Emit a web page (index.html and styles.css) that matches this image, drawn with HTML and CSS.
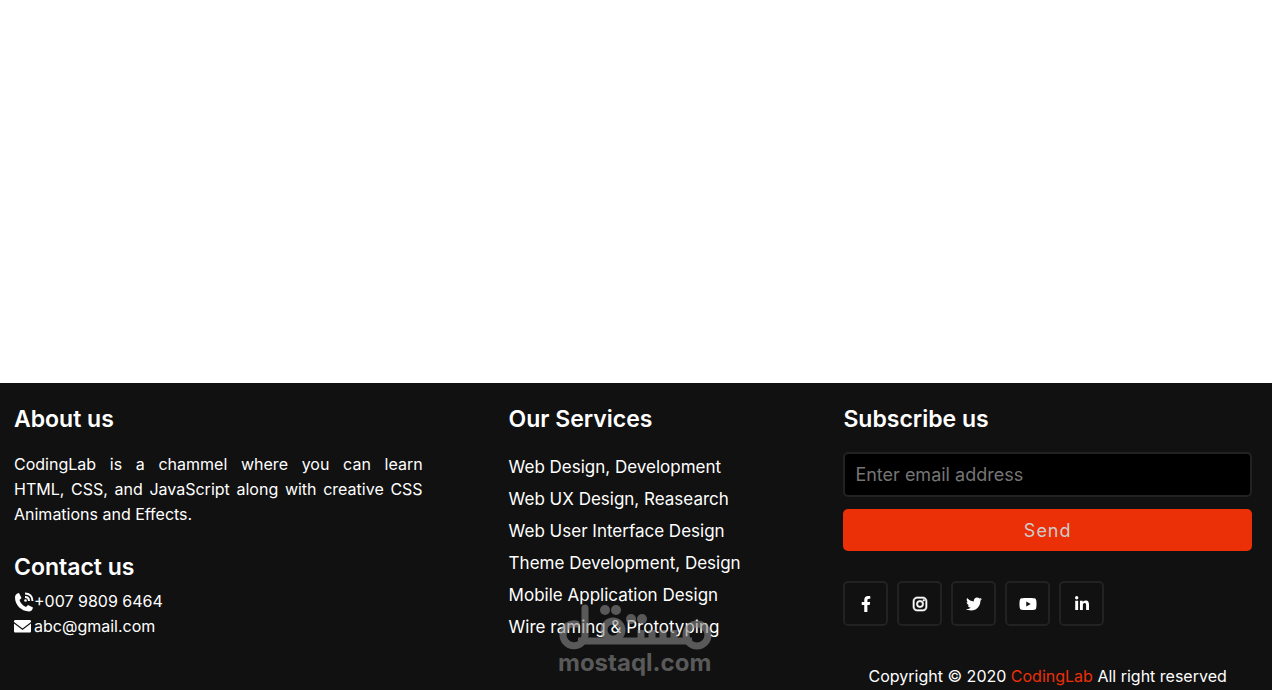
FILE: index.html
```html
<!DOCTYPE html>
<html lang="en">
<head>
  <meta charset="utf-8">
  <meta name="viewport" content="width=device-width, initial-scale=1">
  <title>Footer</title>
  <link rel="stylesheet" href="styles.css">
</head>
<body>
  <footer class="footer">
    <div class="content">
      <div class="left">
        <h2>About us</h2>
        <p class="about">CodingLab is a chammel where you can learn HTML,&nbsp;CSS, and JavaScript along with creative CSS Animations and Effects.</p>
        <h2>Contact us</h2>
        <div class="contact">
          <p>
            <svg viewBox="0 0 20 20" aria-hidden="true">
              <path d="M5 1 7.500 6 5.500 8C6.500 11 8.500 13.500 12 15L14 13 19 15.500C18.500 18 17 19.500 15 19.500 7 19 1 13 1 5.500 1 3 2.500 1.500 5 1Z"/>
              <path class="wave" d="M11 1.500C15.500 1.500 18.500 4.500 18.500 9M11 5C13.500 5 15 6.500 15 9"/>
              <circle cx="11.500" cy="8.500" r="1.300"/>
            </svg>
            <span>+007 9809 6464</span>
          </p>
          <p>
            <svg viewBox="0 0 20 20" aria-hidden="true">
              <path d="M0 4.500C0 3.500.5 3 1.500 3H15.500C16.500 3 17 3.500 17 4.500V5L8.500 11.500 0 5ZM0 6.500 8.500 13 17 6.500V14C17 15 16.500 15.500 15.500 15.500H1.500C.5 15.500 0 15 0 14Z"/>
            </svg>
            <span>abc@gmail.com</span>
          </p>
        </div>
      </div>
      <div class="middle">
        <h2>Our Services</h2>
        <ul>
          <li><a href="#">Web Design, Development</a></li>
          <li><a href="#">Web UX Design, Reasearch</a></li>
          <li><a href="#">Web User Interface Design</a></li>
          <li><a href="#">Theme Development, Design</a></li>
          <li><a href="#">Mobile Application Design</a></li>
          <li><a href="#">Wire raming &amp; Prototyping</a></li>
        </ul>
      </div>
      <div class="right">
        <h2>Subscribe us</h2>
        <form action="#">
          <input type="email" placeholder="Enter email address" aria-label="Email address">
          <button type="submit">Send</button>
        </form>
        <div class="media-icons">
          <a href="#" aria-label="Facebook"><svg viewBox="0 0 320 512"><path d="M279 288l14-93h-89v-60c0-25 12-50 52-50h41V7s-37-7-72-7c-73 0-121 44-121 125v70H23v93h81v224h100V288z"/></svg></a>
          <a href="#" aria-label="Instagram"><svg class="bold" viewBox="0 0 448 512"><path fill-rule="evenodd" d="M132 32H316C389 32 448 91 448 164V348C448 421 389 480 316 480H132C59 480 0 421 0 348V164C0 91 59 32 132 32ZM136 72C82 72 40 114 40 168V344C40 398 82 440 136 440H312C366 440 408 398 408 344V168C408 114 366 72 312 72ZM224 141A115 115 0 1 1 224 371A115 115 0 1 1 224 141ZM224 181A75 75 0 1 0 224 331A75 75 0 1 0 224 181ZM344 109A27 27 0 1 1 344 163A27 27 0 1 1 344 109Z"/></svg></a>
          <a href="#" aria-label="Twitter"><svg viewBox="0 0 512 512"><path d="M459 152c1 4 1 9 1 14 0 138-106 298-299 298-59 0-115-17-161-47 8 1 16 1 25 1 49 0 94-16 130-45-46-1-85-31-98-73 6 1 13 2 20 2 9 0 19-1 28-4-48-10-84-52-84-103v-1c14 8 30 13 47 13-28-19-46-51-46-87 0-19 5-37 14-53 51 64 129 105 216 110-2-8-3-16-3-24 0-58 47-105 105-105 30 0 57 13 76 33 24-5 46-13 66-25-8 24-24 45-46 58 21-2 41-8 60-16-14 21-32 39-51 54z"/></svg></a>
          <a href="#" aria-label="YouTube"><svg viewBox="0 0 576 512"><path fill-rule="evenodd" d="M549 124c-6-24-25-42-48-49-43-11-213-11-213-11S118 64 75 75c-23 7-42 25-48 49-12 43-12 132-12 132s0 90 12 133c6 24 25 42 48 48 43 11 213 11 213 11s170 0 213-11c23-6 42-24 48-48 12-43 12-133 12-133s0-89-12-132zM232 338V175l143 81z"/></svg></a>
          <a href="#" aria-label="LinkedIn"><svg viewBox="0 0 448 512"><path d="M100 448H7V149h93zM54 108A54 54 0 1 1 54 0 54 54 0 0 1 54 108zM448 448h-93V302c0-34-1-79-48-79-49 0-56 38-56 77v148h-93V149h89v41h1c13-24 43-48 88-48 94 0 112 62 112 142z"/></svg></a>
        </div>
        <p class="copyright">Copyright © 2020 <a href="#">CodingLab</a> All right reserved</p>
      </div>
    </div>
    <div class="watermark">
      <svg viewBox="0 0 154 46" aria-hidden="true">
        <path stroke-linecap="round" d="M27 4V31A11 11 0 1 1 18 20"/>
        <path d="M20 37H134M83 36V26M94 36V26M105 36V26M116 36V26"/>
        <circle cx="55" cy="26" r="9"/>
        <circle cx="139" cy="31" r="11"/>
        <g class="dots">
          <circle cx="47" cy="6" r="5"/>
          <circle cx="58" cy="6" r="5"/>
          <circle cx="73" cy="15" r="5"/>
          <circle cx="84" cy="15" r="5"/>
        </g>
      </svg>
      <span>mostaql.com</span>
    </div>
  </footer>
</body>
</html>
```
FILE: styles.css
```css
* {
  margin: 0;
  padding: 0;
  box-sizing: border-box;
  font-family: Inter, "Open Sans", sans-serif;
}

body {
  min-height: 100vh;
  display: flex;
  flex-direction: column;
  justify-content: flex-end;
  background: #fff;
}

.footer {
  position: relative;
  background: #111;
  color: #fff;
  font-size: 16px;
  line-height: 25px;
}

.content {
  display: grid;
  grid-template-columns: 409fr 249fr 409fr;
  column-gap: 86px;
  padding: 18px 20px 1px 14px;
}

h2 {
  font-size: 23px;
  font-weight: 600;
  line-height: 36px;
}

.about {
  margin: 15px 0 22px;
  text-align: justify;
}

.contact {
  margin-top: 4px;
}

.contact p {
  display: flex;
  align-items: center;
}

.contact svg {
  width: 20px;
  height: 20px;
  fill: #fff;
}

.contact .wave {
  fill: none;
  stroke: #fff;
  stroke-width: 2;
}

ul {
  list-style: none;
  margin-top: 14px;
}

li {
  font-size: 17px;
  line-height: 32px;
}

.middle a {
  color: #fff;
  text-decoration: none;
}

input,
button {
  display: block;
  width: 100%;
  border-radius: 5px;
}

input {
  height: 45px;
  margin-top: 15px;
  padding: 0 10px;
  border: 2px solid #222;
  background: #000;
  color: #ccc;
  font-size: 18px;
}

input::placeholder {
  color: #757575;
}

button {
  height: 42px;
  margin-top: 12px;
  border: none;
  background: #eb2f06;
  color: #ccc;
  font-size: 18px;
  letter-spacing: 1px;
  cursor: pointer;
}

.media-icons {
  display: flex;
  gap: 9px;
  margin-top: 30px;
}

.media-icons a {
  display: flex;
  align-items: center;
  justify-content: center;
  width: 45px;
  height: 45px;
  border: 2px solid #222;
  border-radius: 5px;
}

.media-icons svg {
  height: 16px;
  fill: #fff;
}

.media-icons .bold {
  overflow: visible;
  stroke: #fff;
  stroke-width: 20;
}

.copyright {
  margin-top: 38px;
  text-align: center;
}

.copyright a {
  color: #eb2f06;
  text-decoration: none;
}

.watermark {
  position: absolute;
  left: 50%;
  bottom: 12px;
  width: 154px;
  margin-left: -78px;
  color: #8a8a8a;
  opacity: 0.6;
  pointer-events: none;
}

.watermark svg {
  display: block;
  width: 154px;
  height: 46px;
  fill: none;
  stroke: #8a8a8a;
  stroke-width: 7;
}

.watermark .dots {
  fill: #8a8a8a;
  stroke: none;
}

.watermark span {
  font-size: 24px;
  font-weight: 700;
}
```
